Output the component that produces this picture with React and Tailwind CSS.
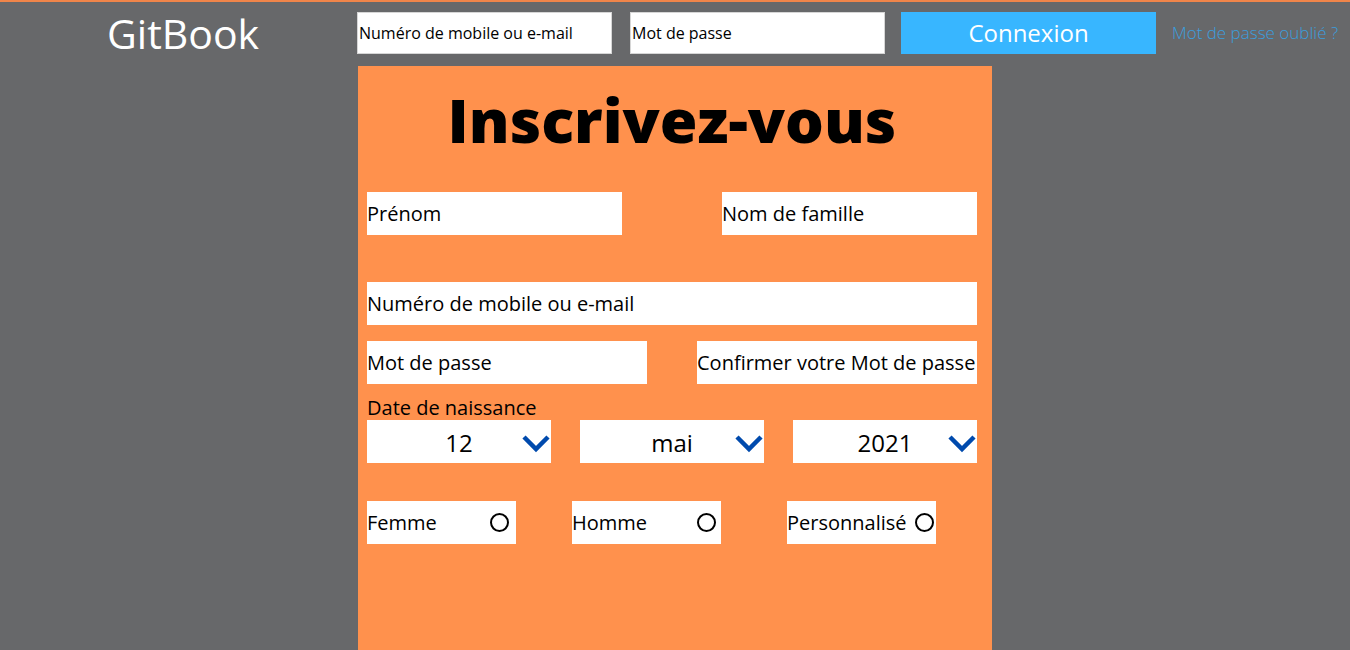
import React from "react";

function Chevron() {
  return (
    <svg width="28" height="18" viewBox="0 0 28 18" className="absolute right-[1px] top-[15px]">
      <polyline points="2,2 14,14 26,2" fill="none" stroke="#004aad" strokeWidth="4.5" />
    </svg>
  );
}

function Select({ value }) {
  return (
    <div className="relative w-[184px] h-[43px] bg-white flex items-center justify-center pt-[3px] text-[24px] text-black">
      {value}
      <Chevron />
    </div>
  );
}

function Radio({ label, pr }) {
  return (
    <div className={`w-[149px] h-[43px] bg-white flex items-center justify-between text-[20px] text-black ${pr}`}>
      <span>{label}</span>
      <span className="w-[19px] h-[19px] rounded-full border-2 border-black"></span>
    </div>
  );
}

function Field({ label, w }) {
  return (
    <div className={`${w} h-[43px] bg-white flex items-center text-[20px] text-black`}>
      {label}
    </div>
  );
}

export default function App() {
  return (
    <div className="min-h-screen w-full bg-[#67686a] font-['Open_Sans',sans-serif]">
      <div className="h-[2px] bg-[#f0854a]"></div>

      {/* Top bar */}
      <div className="h-[62px] flex items-center">
        <div className="w-[357px] pl-[107px] text-white text-[41px] leading-none">GitBook</div>
        <div className="w-[255px] h-[42px] bg-white border border-[#d6d6d6] flex items-center pl-[1px] text-[16px] text-black">
          Numéro de mobile ou e-mail
        </div>
        <div className="ml-[18px] w-[255px] h-[42px] bg-white border border-[#d6d6d6] flex items-center pl-[1px] text-[16px] text-black">
          Mot de passe
        </div>
        <button className="ml-[16px] w-[255px] h-[42px] bg-[#38b6ff] text-white text-[24px]">Connexion</button>
        <a className="ml-[16px] text-[17px] font-light text-[#3b9ede]">Mot de passe oublié ?</a>
      </div>

      {/* Sign-up panel */}
      <div className="mt-[2px] ml-[358px] w-[634px] min-h-[584px] bg-[#ff914d] pt-[23px] pl-[9px] pr-[15px]">
        <h1 className="text-center text-[61px] leading-none font-extrabold text-black">Inscrivez-vous</h1>

        <div className="mt-[42px] flex justify-between">
          <Field label="Prénom" w="w-[255px]" />
          <Field label="Nom de famille" w="w-[255px]" />
        </div>

        <div className="mt-[47px]">
          <Field label="Numéro de mobile ou e-mail" w="w-full" />
        </div>

        <div className="mt-[16px] flex justify-between">
          <Field label="Mot de passe" w="w-[280px]" />
          <Field label="Confirmer votre Mot de passe" w="w-[280px]" />
        </div>

        <div className="mt-[12px] text-[20px] leading-[24px] text-black">Date de naissance</div>
        <div className="flex justify-between">
          <Select value="12" />
          <Select value="mai" />
          <Select value="2021" />
        </div>

        <div className="mt-[38px] flex gap-[56px]">
          <Radio label="Femme" pr="pr-[7px]" />
          <div className="flex gap-[66px]">
            <Radio label="Homme" pr="pr-[5px]" />
            <Radio label="Personnalisé" pr="pr-[2px]" />
          </div>
        </div>
      </div>
    </div>
  );
}
